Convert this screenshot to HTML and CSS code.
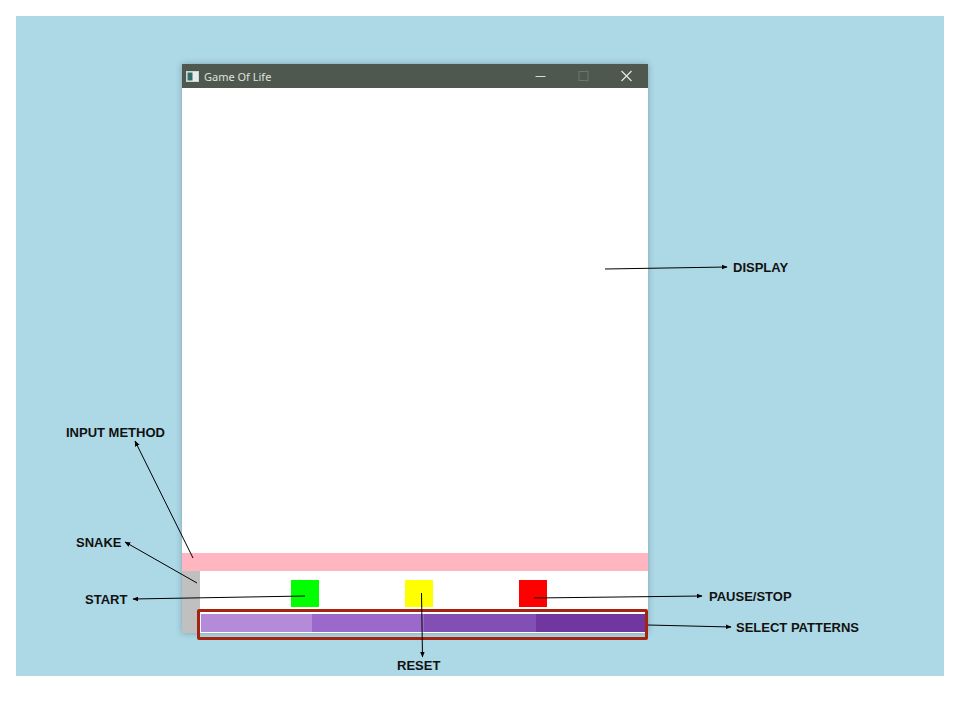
FILE: index.html
```html
<!DOCTYPE html>
<html>
<head>
<meta charset="utf-8">
<title>Game Of Life</title>
<link rel="stylesheet" href="styles.css">
</head>
<body>
<div class="canvas">
  <div class="window">
    <div class="titlebar">
      <svg class="app-icon" width="13" height="11" viewBox="0 0 13 11">
        <rect x="0.5" y="0.5" width="12" height="10" fill="#e8ecec" stroke="#cfd6d6"/>
        <rect x="1.5" y="1.5" width="5" height="8" fill="#2f6f6a"/>
      </svg>
      <span class="title">Game Of Life</span>
      <div class="wincontrols">
        <svg class="ctl" width="43" height="24" viewBox="0 0 43 24"><line x1="16.5" y1="12.5" x2="26.5" y2="12.5" stroke="#d8dcd8" stroke-width="1"/></svg>
        <svg class="ctl" width="43" height="24" viewBox="0 0 43 24"><rect x="17" y="7.5" width="9" height="9" fill="none" stroke="#6c766c" stroke-width="1"/></svg>
        <svg class="ctl" width="43" height="24" viewBox="0 0 43 24"><path d="M16.5 7 L26.5 17 M26.5 7 L16.5 17" stroke="#e4e8e4" stroke-width="1.2"/></svg>
      </div>
    </div>
    <div class="client">
      <div class="display"></div>
      <div class="input-method"></div>
      <div class="bottom">
        <div class="snake"></div>
        <div class="controls">
          <div class="buttons">
            <div class="btn start"></div>
            <div class="btn reset"></div>
            <div class="btn pause"></div>
          </div>
          <div class="patterns">
            <div class="pat p1"></div>
            <div class="pat p2"></div>
            <div class="pat p3"></div>
            <div class="pat p4"></div>
          </div>
        </div>
      </div>
    </div>
  </div>

  <div class="highlight"></div>

  <svg class="arrows" width="928" height="660" viewBox="0 0 928 660">
    <defs>
      <marker id="ah" viewBox="0 0 10 10" refX="9" refY="5" markerWidth="6" markerHeight="6" orient="auto" markerUnits="userSpaceOnUse">
        <path d="M0 1 L10 5 L0 9 Z" fill="#000"/>
      </marker>
    </defs>
    <g stroke="#000" stroke-width="1" fill="none" marker-end="url(#ah)">
      <line x1="589" y1="253" x2="711" y2="251"/>
      <line x1="177" y1="542" x2="119" y2="425"/>
      <line x1="181" y1="567" x2="109" y2="526"/>
      <line x1="289" y1="580" x2="117" y2="583"/>
      <line x1="518" y1="582" x2="686" y2="580"/>
      <line x1="632" y1="609" x2="715" y2="611"/>
      <line x1="405.5" y1="577" x2="406.5" y2="641"/>
    </g>
  </svg>

  <span class="label l-input">INPUT METHOD</span>
  <span class="label l-snake">SNAKE</span>
  <span class="label l-start">START</span>
  <span class="label l-display">DISPLAY</span>
  <span class="label l-pause">PAUSE/STOP</span>
  <span class="label l-select">SELECT PATTERNS</span>
  <span class="label l-reset">RESET</span>
</div>
</body>
</html>
```

FILE: styles.css
```css
html, body {
  margin: 0;
  padding: 0;
  background: #ffffff;
}

body {
  padding: 16px;
  font-family: "Liberation Sans", Arial, sans-serif;
}

.canvas {
  position: relative;
  width: 928px;
  height: 660px;
  background: #add8e6;
}

.window {
  position: absolute;
  left: 166px;
  top: 48px;
  width: 466px;
  display: flex;
  flex-direction: column;
  box-shadow: 0 0 6px rgba(40, 60, 70, 0.35);
}

.titlebar {
  height: 24px;
  background: #4f584f;
  display: flex;
  align-items: center;
  padding-left: 4px;
}

.app-icon {
  display: block;
  margin-right: 5px;
}

.title {
  font-family: "Noto Sans", "Open Sans", sans-serif;
  font-size: 11px;
  color: #dfe3df;
}

.wincontrols {
  margin-left: auto;
  display: flex;
}

.ctl {
  display: block;
}

.client {
  display: flex;
  flex-direction: column;
  background: #ffffff;
}

.display {
  height: 465px;
  background: #ffffff;
}

.input-method {
  height: 18px;
  background: #ffb6c1;
}

.bottom {
  display: flex;
}

.snake {
  width: 18px;
  background: #c0c0c0;
}

.controls {
  flex: 1;
  display: flex;
  flex-direction: column;
  padding-bottom: 1px;
}

.buttons {
  height: 40px;
  display: flex;
  align-items: flex-start;
  padding-top: 9px;
  padding-left: 91px;
  gap: 86px;
  box-sizing: border-box;
}

.btn {
  width: 28px;
  height: 27px;
}

.start { background: #00ff00; }
.reset { background: #ffff00; }
.pause { background: #ff0000; }

.patterns {
  margin-top: 3px;
  margin-left: 1px;
  height: 18px;
  display: grid;
  grid-template-columns: 111px 112px 112px 1fr;
}

.p1 { background: #b48ad9; }
.p2 { background: #9b69c9; }
.p3 { background: #8250b4; }
.p4 { background: #6f379f; }

.highlight {
  position: absolute;
  left: 181px;
  top: 593px;
  width: 445px;
  height: 25px;
  border: 3px solid #a6230f;
  border-radius: 2px;
}

.arrows {
  position: absolute;
  left: 0;
  top: 0;
}

.label {
  position: absolute;
  font-family: "Liberation Sans", Arial, sans-serif;
  font-weight: bold;
  font-size: 13px;
  line-height: 15px;
  color: #111111;
  white-space: nowrap;
}

.l-input { left: 50px; top: 409px; }
.l-snake { left: 60px; top: 519px; }
.l-start { left: 69px; top: 576px; }
.l-display { left: 717px; top: 244px; }
.l-pause { left: 693px; top: 573px; }
.l-select { left: 720px; top: 604px; }
.l-reset { left: 381px; top: 642px; }
```
